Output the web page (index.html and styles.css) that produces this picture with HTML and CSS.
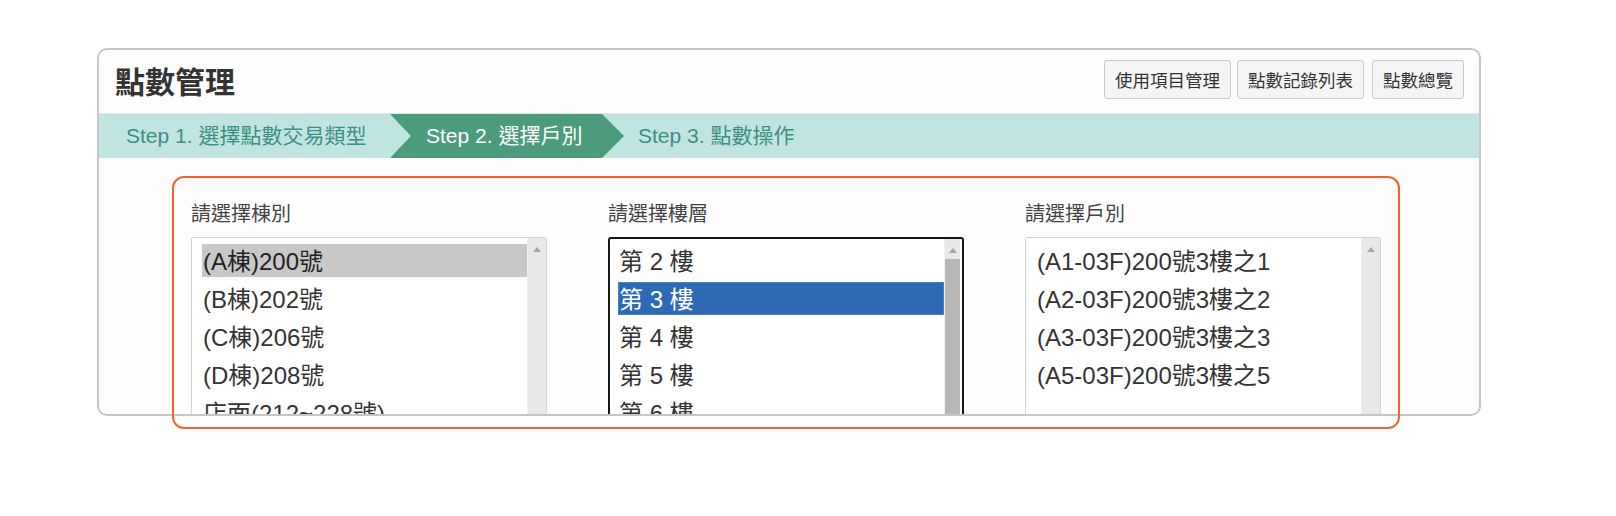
FILE: index.html
```html
<!DOCTYPE html>
<html lang="zh-Hant">
<head>
    <meta charset="UTF-8">
    <meta name="viewport" content="width=device-width, initial-scale=1.0">
    <title>點數管理</title>
    <link rel="stylesheet" href="styles.css">
</head>
<body>
    <div class="page">
        <div class="panel">
            <div class="panel-head">
                <h1 class="panel-title">點數管理</h1>
                <div class="head-actions">
                    <button class="btn" type="button">使用項目管理</button>
                    <button class="btn" type="button">點數記錄列表</button>
                    <button class="btn" type="button">點數總覽</button>
                </div>
            </div>

            <div class="steps">
                <div class="step step-first">Step 1. 選擇點數交易類型</div>
                <div class="step step-active">Step 2. 選擇戶別</div>
                <div class="step step-last">Step 3. 點數操作</div>
            </div>

            <div class="panel-body">
                <div class="pickers">
                    <div class="picker">
                        <div class="picker-label">請選擇棟別</div>
                        <div class="listbox">
                            <ul class="options">
                                <li class="option option-idle">(A棟)200號</li>
                                <li class="option">(B棟)202號</li>
                                <li class="option">(C棟)206號</li>
                                <li class="option">(D棟)208號</li>
                                <li class="option">店面(212~228號)</li>
                            </ul>
                            <div class="scrollbar"><span class="scroll-up"></span></div>
                        </div>
                    </div>

                    <div class="picker">
                        <div class="picker-label">請選擇樓層</div>
                        <div class="listbox listbox-focus">
                            <ul class="options">
                                <li class="option">第 2 樓</li>
                                <li class="option option-picked">第 3 樓</li>
                                <li class="option">第 4 樓</li>
                                <li class="option">第 5 樓</li>
                                <li class="option">第 6 樓</li>
                            </ul>
                            <div class="scrollbar"><span class="scroll-up"></span><span class="scroll-thumb"></span></div>
                        </div>
                    </div>

                    <div class="picker">
                        <div class="picker-label">請選擇戶別</div>
                        <div class="listbox">
                            <ul class="options">
                                <li class="option">(A1-03F)200號3樓之1</li>
                                <li class="option">(A2-03F)200號3樓之2</li>
                                <li class="option">(A3-03F)200號3樓之3</li>
                                <li class="option">(A5-03F)200號3樓之5</li>
                            </ul>
                            <div class="scrollbar"><span class="scroll-up"></span></div>
                        </div>
                    </div>
                </div>
            </div>
        </div>

        <div class="mark-box"></div>
    </div>
</body>
</html>
```

FILE: styles.css
```css
body {
    margin: 0;
    background-color: #fff;
    color: #333;
    font-family: "Liberation Sans", "Noto Sans CJK TC", sans-serif;
}
.page {
    position: relative;
    padding: 48px 0 0 97px;
    height: 468px;
}
.panel {
    width: 1380px;
    height: 364px;
    border: 2px solid #c6c6c8;
    border-radius: 10px;
    background-color: #fdfdfd;
    overflow: hidden;
}
.panel-head {
    display: flex;
    align-items: center;
    justify-content: space-between;
    height: 63px;
    padding: 0 15px 0 16px;
    border-bottom: 1px solid #dfe6e6;
}
.panel-title {
    margin: 0;
    font-size: 30px;
    font-weight: bold;
    color: #333;
    line-height: 1;
    padding-top: 2px;
}
.head-actions {
    display: flex;
    gap: 6px;
    margin-top: -4px;
}
.btn {
    height: 39px;
    padding: 0 10px;
    border: 1px solid #cacaca;
    border-radius: 3px;
    background-color: #f5f5f5;
    color: #333;
    font-family: inherit;
    font-size: 17.5px;
}
.btn:last-child {
    margin-left: 2px;
}
.steps {
    display: flex;
    align-items: center;
    height: 44px;
    background-color: #c0e4e0;
    font-size: 21px;
    line-height: 44px;
    color: #3e8f86;
}
.step-first {
    padding: 0 24px 0 27px;
    width: 240px;
    white-space: nowrap;
}
.step-active {
    width: 156px;
    padding: 0 42px 0 36px;
    background-color: #4b9b7c;
    color: #fff;
    white-space: nowrap;
    clip-path: polygon(0 0, 212px 0, 100% 50%, 212px 100%, 0 100%, 21px 50%);
}
.step-last {
    padding-left: 14px;
}
.panel-body {
    padding-top: 42px;
}
.pickers {
    display: grid;
    grid-template-columns: repeat(3, 356px);
    column-gap: 61px;
    margin-left: 92px;
}
.picker-label {
    font-size: 20px;
    line-height: 28px;
    color: #444;
    margin-bottom: 9px;
}
.listbox {
    display: flex;
    height: 210px;
    border: 1px solid #d3d3d3;
    border-radius: 2px;
    background-color: #fff;
}
.listbox-focus {
    border: 2px solid #161616;
    border-radius: 3px;
}
.listbox-focus .options {
    padding-top: 5px;
    padding-left: 8px;
}
.options {
    flex: 1;
    list-style: none;
    margin: 0;
    padding: 6px 0 0 10px;
    font-size: 24px;
    color: #333;
}
.option {
    height: 33px;
    line-height: 35px;
    margin-bottom: 5px;
    padding: 0 1px;
    white-space: nowrap;
}
.option-idle {
    background-color: #c8c8c9;
    color: #222;
}
.option-picked {
    background-color: #2d6ab3;
    color: #fff;
    box-shadow: inset 0 0 0 1px #4b80c2;
}
.scrollbar {
    position: relative;
    width: 18px;
    background-color: #e8e8e7;
    border-left: 1px solid #f0f0f0;
}
.listbox-focus .scrollbar {
    width: 15px;
    margin-right: 2px;
}
.scroll-up {
    position: absolute;
    top: 9px;
    left: 50%;
    margin-left: -4px;
    border-left: 4px solid transparent;
    border-right: 4px solid transparent;
    border-bottom: 5px solid #a4a4a4;
}
.scroll-thumb {
    position: absolute;
    top: 20px;
    left: 0;
    right: 0;
    bottom: 0;
    background-color: #b7b7b7;
}
.mark-box {
    position: absolute;
    left: 172px;
    top: 176px;
    width: 1224px;
    height: 249px;
    border: 2px solid #f1642f;
    border-radius: 12px;
}
```
